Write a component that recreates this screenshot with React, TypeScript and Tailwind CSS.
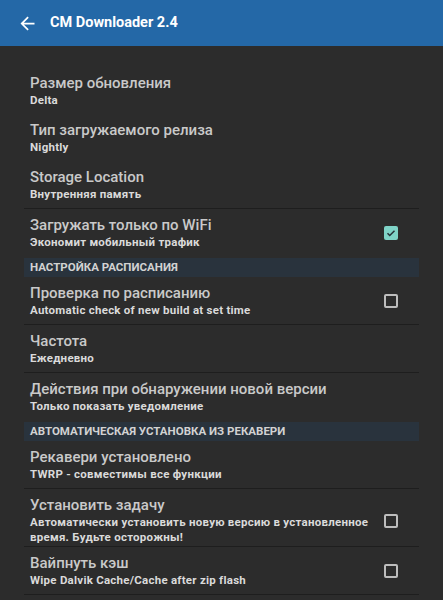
import React from "react";

type Row = {
  title: string;
  sub: string;
  check?: "on" | "off";
  divider?: boolean;
  multi?: boolean;
};

function CheckBox({ on }: { on: boolean }) {
  if (on) {
    return (
      <div className="w-[14px] h-[14px] rounded-[2px] bg-[#7fd3c7] flex items-center justify-center shrink-0">
        <svg width="12" height="12" viewBox="0 0 24 24">
          <path d="M5 12.5l4.5 4.5L19 7.5" fill="none" stroke="#263238" strokeWidth="3" />
        </svg>
      </div>
    );
  }
  return <div className="w-[14px] h-[14px] rounded-[2px] border-2 border-[#bdbdbd] shrink-0" />;
}

function Item({ r }: { r: Row }) {
  return (
    <div
      className={
        "flex items-center justify-between pl-[6px] pr-[21px] pt-[7px] " +
        (r.multi ? "pb-[1px] " : "pb-[6px] ") +
        (r.divider ? "border-b border-[#1e1e1e]" : "")
      }
    >
      <div className="flex flex-col min-w-0">
        <div className="text-[15px] leading-[18px] font-medium text-[#c9c9c9]">{r.title}</div>
        <div className={"mt-[1px] text-[11.5px] leading-[15px] tracking-[0.25px] font-bold text-[#dadada] " + (r.multi ? "max-w-[345px]" : "")}>
          {r.sub}
        </div>
      </div>
      {r.check && <CheckBox on={r.check === "on"} />}
    </div>
  );
}

function Section({ title }: { title: string }) {
  return (
    <div className="mt-[2px] h-[19px] bg-[#29333d] pl-[6px] flex items-center text-[11.5px] font-bold uppercase text-[#d2d2d2]">
      {title}
    </div>
  );
}

export default function App() {
  const g1: Row[] = [
    { title: "Размер обновления", sub: "Delta" },
    { title: "Тип загружаемого релиза", sub: "Nightly" },
    { title: "Storage Location", sub: "Внутренняя память", divider: true },
    { title: "Загружать только по WiFi", sub: "Экономит мобильный трафик", check: "on" },
  ];
  const g2: Row[] = [
    { title: "Проверка по расписанию", sub: "Automatic check of new build at set time", check: "off", divider: true },
    { title: "Частота", sub: "Ежедневно", divider: true },
    { title: "Действия при обнаружении новой версии", sub: "Только показать уведомление" },
  ];
  const g3: Row[] = [
    { title: "Рекавери установлено", sub: "TWRP - совместимы все функции", divider: true },
    {
      title: "Установить задачу",
      sub: "Автоматически установить новую версию в установленное время. Будьте осторожны!",
      check: "off",
      divider: true,
      multi: true,
    },
    { title: "Вайпнуть кэш", sub: "Wipe Dalvik Cache/Cache after zip flash", check: "off", divider: true },
  ];
  return (
    <div className="w-[443px] h-[600px] overflow-hidden bg-[#2c2c2c]" style={{ fontFamily: "Roboto, 'Noto Sans', sans-serif" }}>
      <div className="h-[46px] bg-[#2468a7] flex items-center pl-[17px]">
        <svg width="21" height="21" viewBox="0 0 24 24">
          <path fill="#ffffff" d="M20 11H7.83l5.59-5.59L12 4l-8 8 8 8 1.41-1.41L7.83 13H20v-2z" />
        </svg>
        <div className="ml-[12px] text-[14.5px] font-bold text-white">CM Downloader 2.4</div>
      </div>
      <div className="px-[24px] pt-[21px]">
        {g1.map((r) => (
          <Item key={r.title} r={r} />
        ))}
        <Section title="Настройка расписания" />
        {g2.map((r) => (
          <Item key={r.title} r={r} />
        ))}
        <Section title="Автоматическая установка из рекавери" />
        {g3.map((r) => (
          <Item key={r.title} r={r} />
        ))}
      </div>
    </div>
  );
}
